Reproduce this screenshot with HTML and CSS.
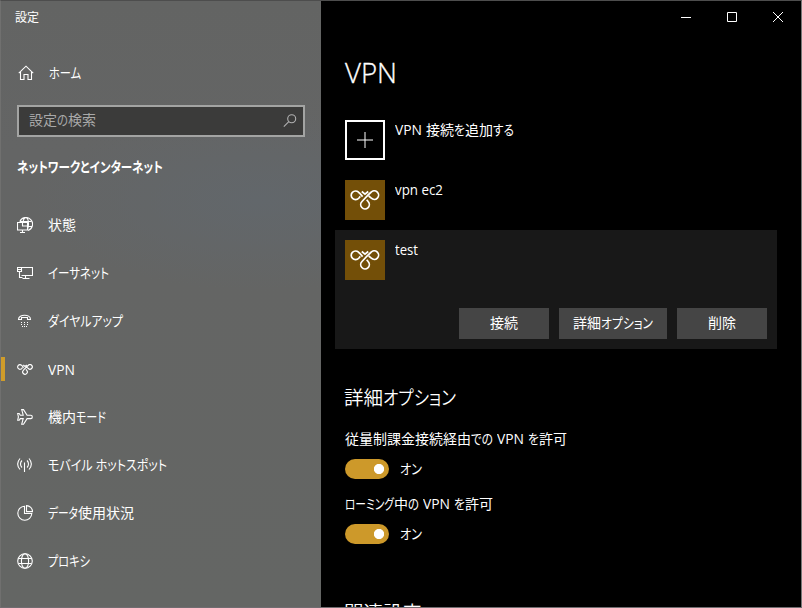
FILE: index.html
```html
<!DOCTYPE html>
<html lang="ja">
<head>
<meta charset="utf-8">
<title>設定</title>
<link rel="stylesheet" href="styles.css">
</head>
<body>
<svg class="defs" width="0" height="0">
  <symbol id="vpn" viewBox="0 0 30 20">
    <path d="M8.700 8.200A4.300 4.300 0 1 1 8.500 2.200C10 3.300 11.200 5 12.600 6.600M21.300 8.200A4.300 4.300 0 1 0 21.300 2C18 4.700 15 8.500 12 11.500A4.300 4.300 0 1 0 18.300 11.800L16.700 9.800M8.700 8.200l1.600-1.800M21.300 8.200L18.700 6M11.800 1.500l3.200 2.700 3.200-2.700"/>
  </symbol>
</svg>
<div class="window">
  <aside class="side">
    <div class="title">設定</div>
    <a class="item home"><svg viewBox="0 0 16 16"><path d="M.8 8.200L8 1.200l7.200 7M2.500 7v7.500h3.500V9.500h4v5h3.500V7"/></svg><span><b data-w="32">ホーム</b></span></a>
    <div class="search"><span>設定<b data-w="11">の</b>検索</span><svg viewBox="0 0 14 14"><circle cx="8.700" cy="4.800" r="4"/><path d="M5.800 7.700L.8 12.700"/></svg></div>
    <h2><b data-w="146">ネットワークとインターネット</b></h2>
    <nav>
      <a class="item"><svg viewBox="0 0 16 16"><path d="M2.800 4.800A6.600 6.600 0 1 1 11 13.400M3 4.500h11.200M10.500 9.500h4.300M6 5C6.500 2.300 7.500.6 8.700.6c1.700 0 2.800 3 2.800 6.400 0 2.400-.4 4.300-1 5.500M.5 5.500h10v7.500H.5zM5.500 13v2.500M3 15.500h5M5.500 5.500v3.500h5"/></svg><span>状態</span></a>
      <a class="item"><svg viewBox="0 0 16 16"><path d="M4.500 2.500h11v8h-11M.5 2.500h4v4h-4zM2.500 6.500v6h3M8.500 10.500v3M5.500 13.500h7M.5 4.500h4"/></svg><span><b data-w="61">イーサネット</b></span></a>
      <a class="item"><svg viewBox="0 0 16 16"><path d="M1.500 6.500C1.500 .8 13.500 .8 13.500 6.500H10.500V4.500H4.500V6.500z"/><path class="dots" d="M4 9.500h1M7 9.500h1M10 9.500h1M4 11.500h1M7 11.500h1M10 11.500h1M5 13.500h1M7 13.500h1M9 13.500h1"/></svg><span><b data-w="75">ダイヤルアップ</b></span></a>
      <a class="item active"><svg class="mini"><use href="#vpn"/></svg><span><b data-w="27">VPN</b></span></a>
      <a class="item"><svg viewBox="0 0 16 16"><path d="M4.700.6h1.800l3.600 5.600h3.700c2 0 2 3.400 0 3.400h-3.700l-3.600 5.700H4.700l1.500-5.700H3.300L2.200 11.300H.7L1.400 7.900.7 4.500h1.500l1.100 1.700h2.900z"/></svg><span>機内<b data-w="30">モード</b></span></a>
      <a class="item"><svg viewBox="0 0 16 16"><path d="M7.500 5.500V15M3 1.500c-3 3.500-3 7.500 0 11M12 1.500c3 3.500 3 7.500 0 11M5 3.500c-2 2-2 5 0 7M10 3.500c2 2 2 5 0 7"/></svg><span><b data-w="119">モバイル ホットスポット</b></span></a>
      <a class="item"><svg viewBox="0 0 16 16"><path d="M7.500 1.200A7 7 0 1 0 14.800 8.500H7.500zM9.500.6v6h6A6 6 0 0 0 9.500.6z"/></svg><span><b data-w="30">データ</b>使用状況</span></a>
      <a class="item"><svg viewBox="0 0 16 16"><circle cx="8" cy="8" r="7.300"/><ellipse cx="8" cy="8" rx="3.600" ry="7.300"/><path d="M1.500 5.500h13M1.500 10.500h13"/></svg><span><b data-w="42">プロキシ</b></span></a>
    </nav>
  </aside>
  <main>
    <div class="controls">
      <svg viewBox="0 0 10 10"><path d="M0 5.500h10"/></svg>
      <svg viewBox="0 0 10 10"><path d="M.5.5h9v9h-9z"/></svg>
      <svg viewBox="0 0 10 10"><path d="M0 0l10 10M10 0L0 10"/></svg>
    </div>
    <h1><b data-w="52">VPN</b></h1>
    <div class="row"><div class="add"><svg viewBox="0 0 16 16"><path d="M8 0v16M0 8h16"/></svg></div><span><b data-w="27">VPN</b><i></i>接続<b data-w="11">を</b>追加<b data-w="21">する</b></span></div>
    <div class="row"><div class="tile"><svg><use href="#vpn"/></svg></div><span><b data-w="48">vpn ec2</b></span></div>
    <section class="card">
      <div class="row"><div class="tile"><svg><use href="#vpn"/></svg></div><span><b data-w="23">test</b></span></div>
      <div class="actions"><button>接続</button><button class="wide">詳細<b data-w="52">オプション</b></button><button>削除</button></div>
    </section>
    <h3>詳細<b data-w="73">オプション</b></h3>
    <p>従量制課金接続経由<b data-w="22">での</b><i></i><b data-w="27">VPN</b><i></i><b data-w="11">を</b>許可</p>
    <div class="toggle"><div class="switch"></div><span><b data-w="22">オン</b></span></div>
    <p><b data-w="49">ローミング</b>中<b data-w="11">の</b><i></i><b data-w="27">VPN</b><i></i><b data-w="11">を</b>許可</p>
    <div class="toggle"><div class="switch"></div><span><b data-w="22">オン</b></span></div>
    <h3 class="related">関連設定</h3>
  </main>
</div>
<script src="script.js"></script>
</body>
</html>
```
FILE: styles.css
```css
* { box-sizing: border-box; }
body { margin: 0; width: 802px; height: 608px; overflow: hidden; color: #fff; font: 14px/20px "Open Sans", "Noto Sans CJK JP", sans-serif; }
b { display: inline-block; font-weight: inherit; font-feature-settings: "palt"; white-space: pre; transform-origin: 0 50%; vertical-align: baseline; }
i { display: inline-block; width: 4px; }
svg { fill: none; stroke: #fff; stroke-width: 1.1; flex: none; display: block; }
.defs { position: absolute; }
.window { display: flex; width: 802px; height: 608px; border: 1px solid #4d4d4d; border-left-color: #70706f; border-right-color: #777; border-bottom-color: #706c70; background: #000; overflow: hidden; }
.side { width: 320px; flex: none; background: radial-gradient(ellipse 230px 90px at 260px 200px, #62676b, rgba(98,103,107,0)), linear-gradient(#636463, #646565 25%, #646564 45%, #646664); }
.title { font-size: 12px; line-height: 16px; padding: 9px 0 0 14px; height: 48px; }
.item { display: flex; align-items: center; height: 48px; padding-left: 16px; }
.item svg { width: 16px; height: 16px; }
.item span { margin-left: 15px; white-space: nowrap; }
.home svg { margin-left: 1px; }
.item .mini { height: 11px; stroke-width: 2.2; }
.dots { stroke-width: 1; }
.active { padding-left: 0; }
.active::before { content: ""; width: 4px; height: 24px; margin-right: 12px; background: #cf9c2a; }
.active span { padding-top: 1px; }
.search { margin: 8px 0 0 16px; width: 288px; height: 32px; border: 2px solid #a3a4a3; background: #3b3b3a; color: #a9a9a9; display: flex; align-items: center; justify-content: space-between; padding: 0 6px 3px 10px; }
.search svg { width: 14px; height: 14px; stroke: #b2b2b2; margin-top: 3px; }
h2 { margin: 20px 0 0 16px; font-size: 14px; line-height: 20px; font-weight: 700; height: 44px; }
main { flex: 1; padding-left: 24px; min-width: 0; }
.controls { display: flex; justify-content: flex-end; gap: 36px; padding: 11px 18px 0 0; height: 56px; }
.controls svg { width: 10px; height: 10px; stroke-width: 1; }
h1 { margin: -1px 0 0; font: 300 28px/32px "Open Sans", sans-serif; height: 64px; -webkit-text-stroke: .3px #fff; }
.row { display: flex; height: 60px; gap: 10px; }
.row span { white-space: nowrap; }
.add, .tile { width: 40px; height: 40px; display: flex; align-items: center; justify-content: center; flex: none; }
.add { border: 2px solid #fff; }
.add svg { width: 16px; height: 16px; stroke-width: 1; }
.tile { background: #734f08; }
.tile svg { width: 30px; height: 20px; stroke-width: 1.7; }
.card { margin: -10px 0 0 -10px; width: 442px; height: 119px; padding: 10px; background: #181818; }
.actions { display: flex; gap: 10px; justify-content: flex-end; margin-top: 8px; }
button { width: 90px; height: 31px; border: 0; padding: 0 0 1px; background: #454545; color: #fff; font: inherit; white-space: nowrap; }
.wide { width: 108px; }
h3 { margin: 35px 0 0 -1px; font-size: 19.5px; font-weight: 350; line-height: 26px; font-family: "Noto Sans CJK JP", sans-serif; }
p { margin: 20px 0 0; line-height: 20px; white-space: nowrap; }
h3 + p { margin-top: 19px; }
.toggle { display: flex; gap: 11px; height: 20px; margin-top: 10px; }
.toggle + p { margin-top: 15px; }
.switch { width: 44px; height: 20px; border-radius: 10px; background: radial-gradient(circle at 34px 10px, #fff 4.7px, transparent 5.5px), #cd992a; }
.related { margin-top: 55px; }
```
FILE: script.js
```js
document.querySelectorAll("b[data-w]").forEach(run => {
  const natural = run.getBoundingClientRect().width;
  const width = Number(run.dataset.w);
  run.style.width = width + "px";
  run.style.transform = `scaleX(${width / natural})`;
});
```
